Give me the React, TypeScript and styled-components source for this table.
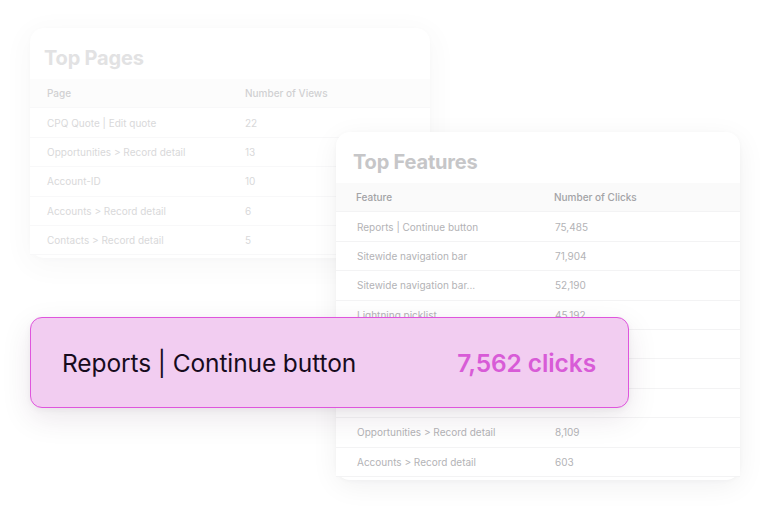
import React from "react";
import styled, { createGlobalStyle } from "styled-components";

const Global = createGlobalStyle`
  html, body { margin: 0; padding: 0; background: #ffffff; }
  body { font-family: Inter, "Noto Sans", sans-serif; }
`;

const Stage = styled.div`
  position: relative;
  width: 770px;
  height: 516px;
  overflow: hidden;
  background: #ffffff;
`;

const Card = styled.section<{ $left: number; $top: number; $width: number; $faded?: boolean }>`
  position: absolute;
  left: ${(p) => p.$left}px;
  top: ${(p) => p.$top}px;
  width: ${(p) => p.$width}px;
  background: #ffffff;
  border-radius: 14px;
  box-shadow: 0 6px 28px rgba(20, 20, 40, 0.06), 0 1px 4px rgba(20, 20, 40, 0.03);
  padding-bottom: 3px;
  opacity: ${(p) => (p.$faded ? 0.5 : 1)};
  display: flex;
  flex-direction: column;
`;

const Title = styled.h2<{ $pad: number }>`
  margin: 0;
  box-sizing: border-box;
  padding: 8px ${(p) => p.$pad}px 0;
  height: 51px;
  display: flex;
  align-items: center;
  font-size: 20px;
  font-weight: 700;
  color: #c6c6c8;
  letter-spacing: -0.2px;
`;

const Row = styled.div<{ $head?: boolean; $pad: number }>`
  display: grid;
  grid-template-columns: 198px 1fr;
  align-items: center;
  height: 29.4px;
  box-sizing: border-box;
  padding: 0 17px 0 ${(p) => p.$pad}px;
  border-bottom: 1px solid #f3f3f4;
  background: ${(p) => (p.$head ? "#fafafa" : "#ffffff")};
  font-size: 10px;
  font-weight: ${(p) => (p.$head ? 500 : 400)};
  color: ${(p) => (p.$head ? "#a3a3a6" : "#b3b3b6")};
  white-space: nowrap;
`;

const Popup = styled.div`
  position: absolute;
  left: 30px;
  top: 317px;
  width: 599px;
  height: 91px;
  box-sizing: border-box;
  border: 1px solid #df55dd;
  border-radius: 12px;
  background: #f2cdf1;
  box-shadow: 0 10px 30px rgba(60, 20, 60, 0.10), 0 2px 6px rgba(60, 20, 60, 0.05);
  display: flex;
  align-items: center;
  justify-content: space-between;
  padding: 0 32px 0 31px;
`;

const PopupLabel = styled.span`
  font-size: 24.5px;
  font-weight: 400;
  color: #170b1d;
  letter-spacing: -0.1px;
`;

const PopupValue = styled.span`
  font-size: 24.5px;
  font-weight: 600;
  color: #d85bd7;
  letter-spacing: -0.1px;
`;

const pages: [string, string][] = [
  ["CPQ Quote | Edit quote", "22"],
  ["Opportunities > Record detail", "13"],
  ["Account-ID", "10"],
  ["Accounts > Record detail", "6"],
  ["Contacts > Record detail", "5"],
];

const features: [string, string][] = [
  ["Reports | Continue button", "75,485"],
  ["Sitewide navigation bar", "71,904"],
  ["Sitewide navigation bar...", "52,190"],
  ["Lightning picklist", "45,192"],
  ["", ""],
  ["", ""],
  ["", ""],
  ["Opportunities > Record detail", "8,109"],
  ["Accounts > Record detail", "603"],
];

export default function App() {
  return (
    <Stage>
      <Global />
      <Card $left={30} $top={28} $width={400} $faded>
        <Title $pad={14}>Top Pages</Title>
        <Row $head $pad={17}>
          <span>Page</span>
          <span>Number of Views</span>
        </Row>
        {pages.map(([a, b]) => (
          <Row key={a} $pad={17}>
            <span>{a}</span>
            <span>{b}</span>
          </Row>
        ))}
      </Card>
      <Card $left={336} $top={132} $width={404}>
        <Title $pad={17}>Top Features</Title>
        <Row $head $pad={20}>
          <span>Feature</span>
          <span>Number of Clicks</span>
        </Row>
        {features.map(([a, b], i) => (
          <Row key={i} $pad={21}>
            <span>{a}</span>
            <span>{b}</span>
          </Row>
        ))}
      </Card>
      <Popup>
        <PopupLabel>Reports | Continue button</PopupLabel>
        <PopupValue>7,562 clicks</PopupValue>
      </Popup>
    </Stage>
  );
}
